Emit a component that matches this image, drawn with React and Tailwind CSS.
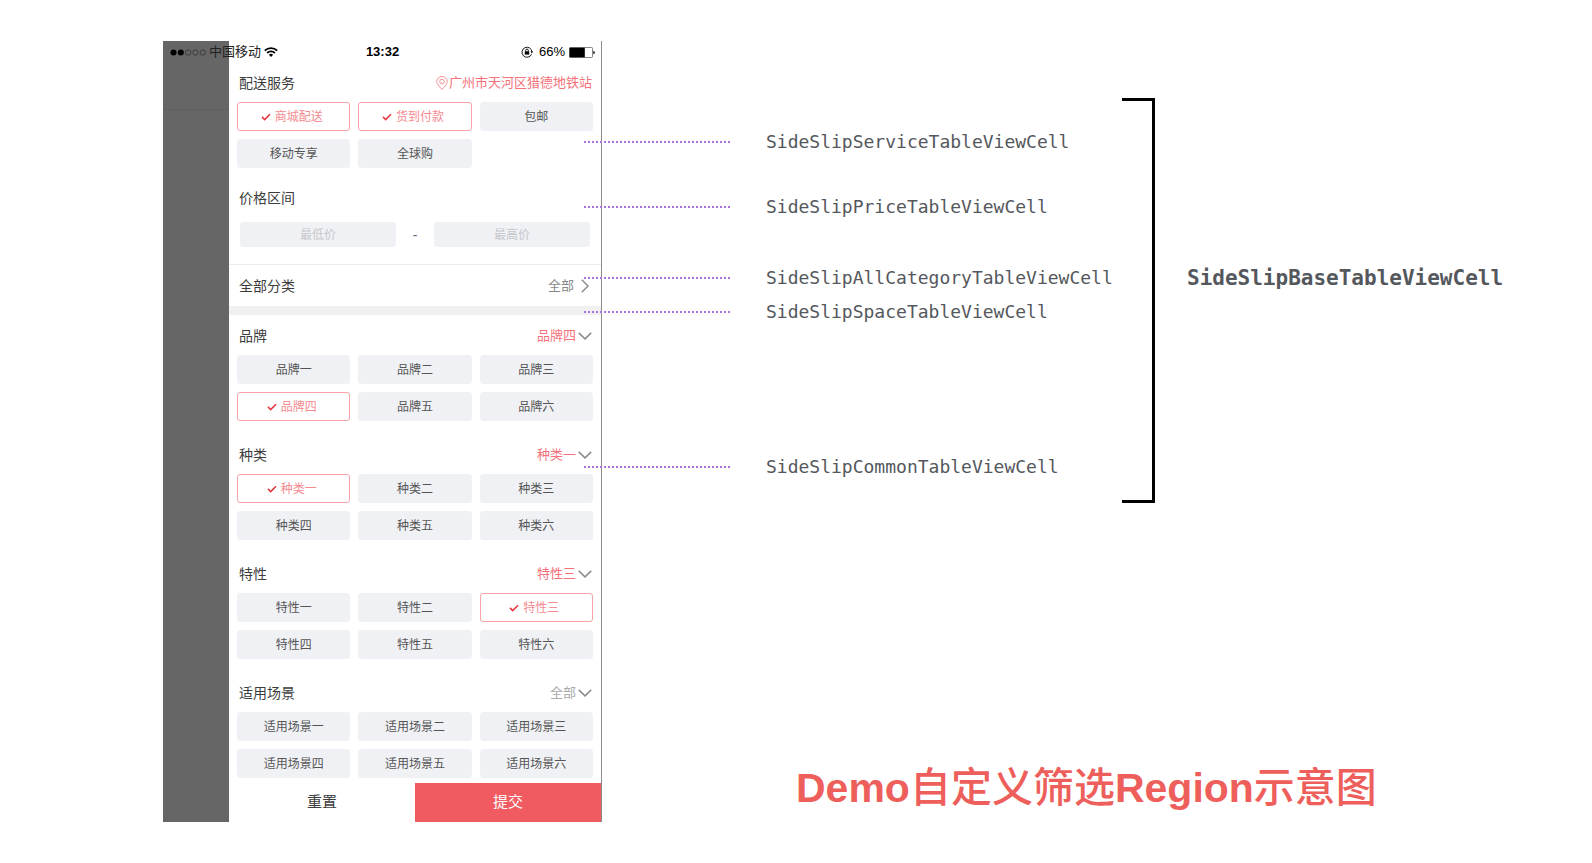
import { useState } from "react";

const SECTIONS = [
  { title: "品牌", options: ["品牌一", "品牌二", "品牌三", "品牌四", "品牌五", "品牌六"], initial: "品牌四" },
  { title: "种类", options: ["种类一", "种类二", "种类三", "种类四", "种类五", "种类六"], initial: "种类一" },
  { title: "特性", options: ["特性一", "特性二", "特性三", "特性四", "特性五", "特性六"], initial: "特性三" },
  {
    title: "适用场景",
    options: ["适用场景一", "适用场景二", "适用场景三", "适用场景四", "适用场景五", "适用场景六"],
    initial: null,
  },
];

const SERVICES = ["商城配送", "货到付款", "包邮", "移动专享", "全球购"];

function CheckIcon() {
  return (
    <svg className="h-2 w-[10px]" viewBox="0 0 10 8" fill="none" aria-hidden="true">
      <path d="M1 3.9 3.7 6.6 9 1.2" stroke="#e8343c" strokeWidth="1.5" />
    </svg>
  );
}

function PinIcon() {
  return (
    <svg className="h-[14px] w-3" viewBox="0 0 12 14" fill="none" stroke="#f3868c" strokeWidth="0.9" aria-hidden="true">
      <path d="M6 13.4C4.6 11.6.7 8.6.7 5.5a5.3 5 0 0 1 10.6 0C11.3 8.6 7.4 11.6 6 13.4Z" />
      <circle cx="6" cy="5.5" r="2.3" />
    </svg>
  );
}

function ChevronDown() {
  return (
    <svg className="h-2 w-[14px]" viewBox="0 0 14 8" fill="none" aria-hidden="true">
      <path d="M.8.9 7 6.9 13.2.9" stroke="#8c8c8c" strokeWidth="1.5" />
    </svg>
  );
}

function ChevronRight() {
  return (
    <svg className="h-[14px] w-2" viewBox="0 0 8 14" fill="none" aria-hidden="true">
      <path d="M.8.7 7 7 .8 13.3" stroke="#8c8c8c" strokeWidth="1.5" />
    </svg>
  );
}

function StatusBar() {
  return (
    <div className="absolute inset-x-0 top-0 grid h-[22px] grid-cols-[1fr_auto_1fr] items-center pr-[7px] pl-[7px] text-[13px] text-black">
      <div className="flex items-center">
        <svg className="mr-[2px] h-[7px] w-[37px]" viewBox="0 0 37 7" fill="none" aria-hidden="true">
          <circle cx="3.5" cy="3.5" r="3" fill="#000" />
          <circle cx="10.8" cy="3.5" r="3" fill="#000" />
          <circle cx="18.2" cy="3.5" r="2.7" stroke="#222" strokeWidth="0.6" />
          <circle cx="25.5" cy="3.5" r="2.7" stroke="#222" strokeWidth="0.6" />
          <circle cx="32.8" cy="3.5" r="2.7" stroke="#222" strokeWidth="0.6" />
        </svg>
        <span className="mr-[3px] text-[#222]">中国移动</span>
        <svg className="h-[10px] w-[14px]" viewBox="0 0 14 10" fill="none" stroke="#000" strokeWidth="1.8" aria-hidden="true">
          <path d="M.8 3.6a8.8 8.8 0 0 1 12.4 0" />
          <path d="M3.1 6a5.5 5.5 0 0 1 7.8 0" />
          <path d="M7 9.9 4.9 7.8a3 3 0 0 1 4.2 0Z" fill="#000" stroke="none" />
        </svg>
      </div>
      <span className="font-bold">13:32</span>
      <div className="flex items-center justify-end">
        <svg className="mr-[6px] h-3 w-3" viewBox="0 0 12 12" fill="none" aria-hidden="true">
          <path d="M10.6 8.2A5 5 0 1 1 11 6" stroke="#000" strokeWidth="0.9" />
          <path d="M9.5 5.6h2.5L10.9 7.6Z" fill="#000" />
          <rect x="3.8" y="5.3" width="4.4" height="3.3" fill="#000" />
          <path d="M4.7 5.5V4.4a1.3 1.3 0 0 1 2.6 0v1.1" stroke="#000" strokeWidth="0.9" />
        </svg>
        <span className="mr-1">66%</span>
        <svg className="h-[11px] w-[26px]" viewBox="0 0 26 11" fill="none" aria-hidden="true">
          <rect x="0.5" y="0.5" width="23" height="10" rx="0.8" stroke="#555" strokeWidth="0.7" />
          <rect x="0.5" y="0.7" width="15.3" height="9.6" fill="#000" />
          <path d="M24.4 3.7c1.8.3 1.8 3.3 0 3.6Z" fill="#000" />
        </svg>
      </div>
    </div>
  );
}

function Chip({ label, selected, onClick }) {
  return (
    <button
      type="button"
      aria-pressed={selected}
      onClick={onClick}
      className={
        "flex h-[29px] items-center justify-center gap-1 rounded-[3px] border text-xs " +
        (selected ? "border-[#f7a3a8] bg-white pr-1 text-[#f58a90]" : "border-[#f0f1f5] bg-[#f0f1f5] text-[#555]")
      }
    >
      {selected && <CheckIcon />}
      {label}
    </button>
  );
}

function SectionHead({ title, children }) {
  return (
    <div className="flex h-[38px] items-center justify-between pr-[9px] pl-[10px]">
      <h2 className="text-sm text-[#3c3c3c]">{title}</h2>
      {children}
    </div>
  );
}

function ChipGrid({ children }) {
  return <div className="grid grid-cols-3 gap-2 px-2">{children}</div>;
}

function FilterSection({ title, options, initial }) {
  const [value, setValue] = useState(initial);
  return (
    <section>
      <SectionHead title={title}>
        <button type="button" className="flex items-center gap-[2px] text-[13px]">
          <span className={value ? "text-[#f4717a]" : "text-[#aaa]"}>{value ?? "全部"}</span>
          <ChevronDown />
        </button>
      </SectionHead>
      <ChipGrid>
        {options.map((o) => (
          <Chip key={o} label={o} selected={o === value} onClick={() => setValue(o === value ? null : o)} />
        ))}
      </ChipGrid>
    </section>
  );
}

function PriceInput({ label }) {
  return (
    <input
      type="text"
      aria-label={label}
      placeholder={label}
      className="h-[25px] w-0 flex-1 rounded-[3px] bg-[#f0f1f5] text-center text-xs text-[#555] outline-none placeholder:text-[#c6c7cb]"
    />
  );
}

function Phone() {
  const [services, setServices] = useState(["商城配送", "货到付款"]);
  const toggle = (s) => setServices((cur) => (cur.includes(s) ? cur.filter((x) => x !== s) : [...cur, s]));
  return (
    <div className="relative flex w-[439px] shrink-0">
      <div className="w-[66px] bg-[#666]">
        <div className="h-[69px] border-b border-[#5e5e5e]" />
      </div>
      <div className="flex flex-1 flex-col border-r border-[#8c8c8c] bg-white pt-[23px]">
        <section>
          <SectionHead title="配送服务">
            <button type="button" className="flex items-center gap-px text-[13px] text-[#f4717a]">
              <PinIcon />
              广州市天河区猎德地铁站
            </button>
          </SectionHead>
          <ChipGrid>
            {SERVICES.map((s) => (
              <Chip key={s} label={s} selected={services.includes(s)} onClick={() => toggle(s)} />
            ))}
          </ChipGrid>
        </section>
        <section className="border-b border-[#ebebeb] pt-[11px] pb-[17px]">
          <SectionHead title="价格区间" />
          <div className="flex items-center px-[11px] pt-[5px]">
            <PriceInput label="最低价" />
            <span className="w-[38px] text-center text-sm leading-none text-[#666]">-</span>
            <PriceInput label="最高价" />
          </div>
        </section>
        <button type="button" className="flex h-[41px] items-center justify-between pr-3 pl-[10px]">
          <span className="text-sm text-[#3c3c3c]">全部分类</span>
          <span className="flex items-center gap-[7px] text-[13px] text-[#888]">
            全部
            <ChevronRight />
          </span>
        </button>
        <div className="h-[9px] bg-[#f0f0f0]" />
        <div className="flex flex-col gap-[15px] pt-[2px] pb-[5px]">
          {SECTIONS.map((s) => (
            <FilterSection key={s.title} {...s} />
          ))}
        </div>
        <div className="grid h-[39px] grid-cols-2 text-[15px]">
          <button type="button" className="bg-white text-[#3c3c3c]">
            重置
          </button>
          <button type="button" className="bg-[#f05b61] text-white">
            提交
          </button>
        </div>
      </div>
      <StatusBar />
    </div>
  );
}

function Callout({ className = "", children }) {
  return (
    <li className={"flex h-6 items-center gap-9 " + className}>
      <span className="w-[146px] border-t-2 border-dotted border-[#a873dd]" />
      {children}
    </li>
  );
}

export default function App() {
  return (
    <main className="flex min-h-screen items-start bg-white pt-[41px] pl-[163px] font-['Liberation_Sans','Noto_Sans_CJK_SC',sans-serif]">
      <div className="flex">
        <Phone />
        <div className="relative -ml-[18px] flex flex-col justify-between pb-[10px]">
          <div className="flex items-start font-['DejaVu_Sans_Mono',monospace] text-[#54585d]">
            <ul className="w-[538px] pt-[89px] text-lg leading-6">
              <Callout>SideSlipServiceTableViewCell</Callout>
              <Callout className="mt-[41px]">SideSlipPriceTableViewCell</Callout>
              <Callout className="mt-[47px]">SideSlipAllCategoryTableViewCell</Callout>
              <Callout className="mt-[10px]">SideSlipSpaceTableViewCell</Callout>
              <Callout className="mt-[131px]">SideSlipCommonTableViewCell</Callout>
            </ul>
            <div className="mt-[57px] h-[405px] w-[33px] border-y-[3px] border-r-[3px] border-black" />
            <strong className="mt-[223px] ml-8 text-[21px] leading-7">SideSlipBaseTableViewCell</strong>
          </div>
          <h1 className="pl-[212px] text-[41px] leading-[48px] font-bold text-[#ee5f5c]">
            Demo<span className="font-medium">自定义筛选</span>Region<span className="font-medium">示意图</span>
          </h1>
        </div>
      </div>
    </main>
  );
}
